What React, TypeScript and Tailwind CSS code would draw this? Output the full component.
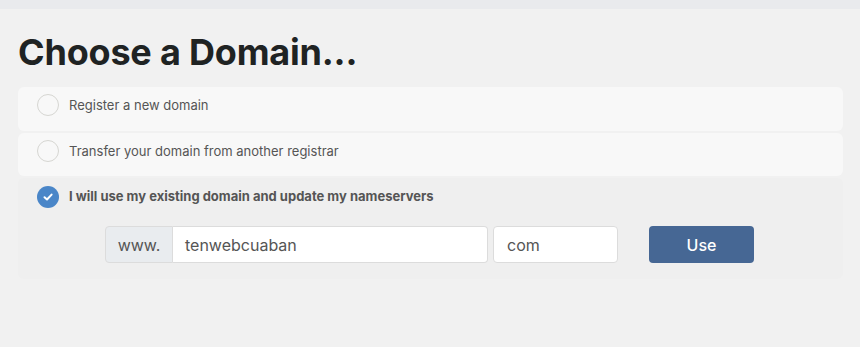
import React from "react";

function Radio({ checked }: { checked?: boolean }) {
  if (checked) {
    return (
      <span className="flex h-[22px] w-[22px] shrink-0 items-center justify-center rounded-full bg-[#4a86c8]">
        <svg width="12" height="12" viewBox="0 0 12 12" fill="none">
          <path d="M2.5 6.2 L5 8.5 L9.6 3.6" stroke="white" strokeWidth="2" strokeLinecap="round" strokeLinejoin="round" />
        </svg>
      </span>
    );
  }
  return <span className="h-[22px] w-[22px] shrink-0 rounded-full border border-[#d6d6d2] bg-[#f8f8f8]" />;
}

export default function App() {
  return (
    <div className="min-h-[347px] w-[860px] bg-[#f1f1f1]" style={{ fontFamily: "Inter, 'Noto Sans', sans-serif" }}>
      <div className="h-[9px] bg-[#e9eaed]" />
      <div className="pl-[18px] pr-[17px]">
        <h1 className="mt-[21px] text-[36px] font-bold leading-[44px] tracking-[-0.2px] text-[#1f2323]">Choose a Domain...</h1>
        <div className="mt-[13px] flex flex-col gap-[2px]">
          <div className="flex h-[44px] items-start gap-[10px] rounded-[6px] bg-[#f8f8f8] pl-[19px] pt-[7px]">
            <Radio />
            <span className="text-[13px] leading-[22px] text-[#555]">Register a new domain</span>
          </div>
          <div className="flex h-[43px] items-start gap-[10px] rounded-[6px] bg-[#f8f8f8] pl-[19px] pt-[7px]">
            <Radio />
            <span className="text-[13px] leading-[22px] text-[#555]">Transfer your domain from another registrar</span>
          </div>
          <div className="h-[101px] rounded-[6px] bg-[#efefef] pl-[19px] pt-[8px]">
            <div className="flex items-center gap-[10px]">
              <Radio checked />
              <span className="text-[13px] font-bold text-[#555]">I will use my existing domain and update my nameservers</span>
            </div>
            <div className="ml-[68px] mt-[18px] flex items-center">
              <div className="flex h-[37px] w-[68px] items-center justify-center rounded-l-[4px] border border-[#dcdcdc] bg-[#e9ecef] text-[16px] text-[#555]">
                www.
              </div>
              <div className="flex h-[37px] w-[315px] items-center rounded-r-[4px] border border-l-0 border-[#dcdcdc] bg-white pl-[12px] text-[16px] text-[#555]">
                tenwebcuaban
              </div>
              <div className="ml-[5px] flex h-[37px] w-[125px] items-center rounded-[4px] border border-[#dcdcdc] bg-white pl-[13px] text-[16px] text-[#555]">
                com
              </div>
              <button className="ml-[31px] flex h-[37px] w-[105px] items-center justify-center rounded-[4px] bg-[#466794] text-[16px] font-medium text-white">
                Use
              </button>
            </div>
          </div>
        </div>
      </div>
    </div>
  );
}
